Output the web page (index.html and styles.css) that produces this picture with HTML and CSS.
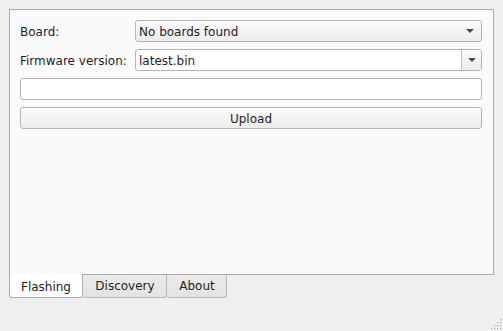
FILE: index.html
```html
<!DOCTYPE html>
<html>
<head>
<meta charset="utf-8">
<link rel="stylesheet" href="styles.css">
</head>
<body>
<div class="window">
  <div class="panel">
    <div class="row">
      <span class="label">Board:</span>
      <div class="combo">
        <span class="combo-text">No boards found</span>
        <span class="arrow"></span>
      </div>
    </div>
    <div class="row">
      <span class="label">Firmware version:</span>
      <div class="combo editable">
        <span class="combo-text">latest.bin</span>
        <span class="combo-btn"><span class="arrow"></span></span>
      </div>
    </div>
    <div class="lineedit"></div>
    <div class="button">Upload</div>
  </div>
  <div class="tabs">
    <div class="tab selected">Flashing</div>
    <div class="tab">Discovery</div>
    <div class="tab">About</div>
  </div>
</div>
<svg class="grip" width="12" height="12" viewBox="0 0 12 12">
  <g fill="#a8a8a8">
    <rect x="10" y="0" width="1" height="1"/>
    <rect x="7" y="3" width="1" height="1"/><rect x="10" y="3" width="1" height="1"/>
    <rect x="4" y="6" width="1" height="1"/><rect x="7" y="6" width="1" height="1"/><rect x="10" y="6" width="1" height="1"/>
    <rect x="1" y="9" width="1" height="1"/><rect x="4" y="9" width="1" height="1"/><rect x="7" y="9" width="1" height="1"/><rect x="10" y="9" width="1" height="1"/>
  </g>
  <g fill="#d8d8d8">
    <rect x="11" y="1" width="1" height="1"/>
    <rect x="8" y="4" width="1" height="1"/><rect x="11" y="4" width="1" height="1"/>
    <rect x="5" y="7" width="1" height="1"/><rect x="8" y="7" width="1" height="1"/><rect x="11" y="7" width="1" height="1"/>
    <rect x="2" y="10" width="1" height="1"/><rect x="5" y="10" width="1" height="1"/><rect x="8" y="10" width="1" height="1"/><rect x="11" y="10" width="1" height="1"/>
  </g>
</svg>
</body>
</html>
```
FILE: styles.css
```css
html, body {
  margin: 0;
  padding: 0;
  background: #efefef;
  width: 503px;
  height: 331px;
  overflow: hidden;
  font-family: "DejaVu Sans", "Liberation Sans", sans-serif;
  font-size: 12px;
  color: #1e1e1e;
  position: relative;
}
.window {
  padding: 9px 0 0 9px;
}
.panel {
  box-sizing: border-box;
  width: 485px;
  height: 266px;
  border: 1px solid #acacac;
  background: #fafafa;
  padding: 10px 11px 0 10px;
  display: flex;
  flex-direction: column;
  gap: 7px;
}
.row {
  display: flex;
  align-items: center;
  height: 22px;
}
.label {
  width: 115px;
  flex: none;
  line-height: 22px;
  padding-top: 2px;
}
.combo {
  box-sizing: border-box;
  flex: 1;
  height: 22px;
  border: 1px solid #b4b4b4;
  border-radius: 3px;
  background: linear-gradient(#fbfbfb, #ececec);
  display: flex;
  align-items: center;
  padding-left: 3px;
  position: relative;
}
.combo-text {
  flex: 1;
  line-height: 20px;
  padding-top: 2px;
}
.combo .arrow {
  width: 0;
  height: 0;
  border-left: 4px solid transparent;
  border-right: 4px solid transparent;
  border-top: 4px solid #4a4a4a;
  margin-right: 7px;
}
.combo.editable {
  background: #ffffff;
  padding-left: 3px;
}
.combo-btn {
  box-sizing: border-box;
  width: 20px;
  height: 20px;
  border-left: 1px solid #c4c4c4;
  background: linear-gradient(#fbfbfb, #ececec);
  border-radius: 0 2px 2px 0;
  display: flex;
  align-items: center;
  justify-content: center;
}
.combo-btn .arrow {
  margin-right: 0;
}
.lineedit {
  box-sizing: border-box;
  height: 22px;
  border: 1px solid #b4b4b4;
  border-radius: 3px;
  background: #ffffff;
}
.button {
  box-sizing: border-box;
  height: 22px;
  border: 1px solid #b4b4b4;
  border-radius: 3px;
  background: linear-gradient(#fbfbfb, #ececec);
  text-align: center;
  line-height: 20px;
  padding-top: 1px;
}
.tabs {
  display: flex;
  margin-top: -1px;
}
.tab {
  box-sizing: border-box;
  height: 23px;
  margin-top: 1px;
  border: 1px solid #b8b8b8;
  border-top: none;
  border-left: none;
  border-radius: 0 0 3px 3px;
  background: linear-gradient(#ebebeb, #e3e3e3);
  text-align: center;
  line-height: 21px;
  padding: 1px 10px 0 11px;
}
.tab:nth-child(2) { width: 84px; border-left: 1px solid #b8b8b8; }
.tab:nth-child(3) { width: 60px; }
.tab.selected {
  width: 74px;
  height: 24px;
  margin-top: 0;
  background: #ffffff;
  border: 1px solid #b0b0b0;
  border-top: none;
  border-radius: 0 0 3px 3px;
  line-height: 24px;
  padding: 1px 10px 0 10px;
  position: relative;
  z-index: 1;
}
.tab.selected + .tab { border-left: none; }
.grip {
  position: absolute;
  left: 490px;
  top: 319px;
}
```
